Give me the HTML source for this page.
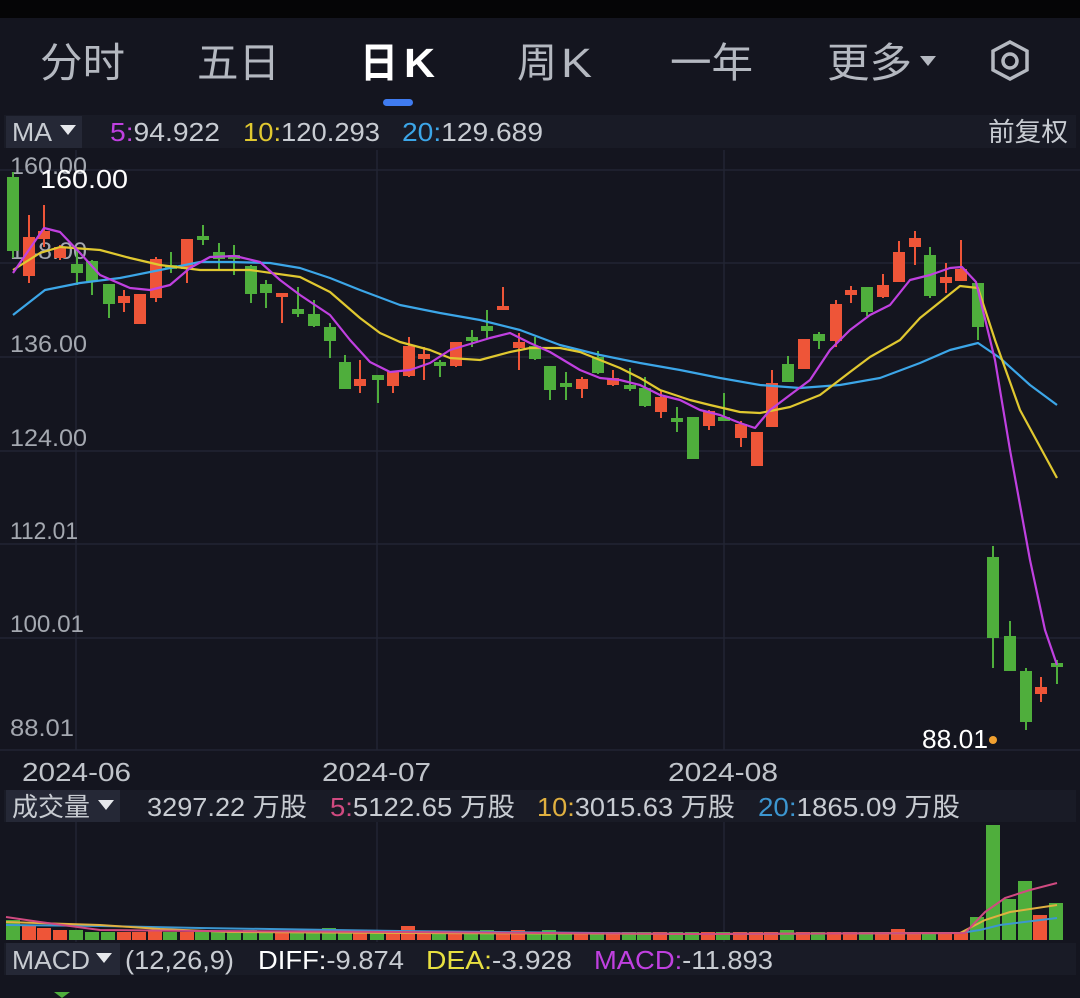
<!DOCTYPE html>
<html><head><meta charset="utf-8"><style>
body{margin:0;width:1080px;height:998px;background:#14151f;overflow:hidden;font-family:"Liberation Sans","Noto Sans CJK SC",sans-serif;}
svg{position:absolute;left:0;top:0}
</style></head><body>
<svg width="1080" height="998" xmlns="http://www.w3.org/2000/svg" font-family="Liberation Sans, Noto Sans CJK SC, sans-serif">
<rect x="0" y="0" width="1080" height="998" fill="#14151f"/>
<rect x="0" y="0" width="1080" height="18" fill="#050506"/>
<!-- tabs -->
<g font-size="41" fill="#b4b8c0">
<text x="40" y="77" textLength="85" lengthAdjust="spacingAndGlyphs">分时</text>
<text x="197" y="77" textLength="83" lengthAdjust="spacingAndGlyphs">五日</text>
<text x="360" y="77" fill="#ffffff" font-weight="bold" textLength="38" lengthAdjust="spacingAndGlyphs">日</text><text x="404" y="77" fill="#ffffff" font-weight="bold" textLength="31" lengthAdjust="spacingAndGlyphs">K</text>
<text x="517" y="77" textLength="40" lengthAdjust="spacingAndGlyphs">周</text><text x="561" y="77" textLength="31" lengthAdjust="spacingAndGlyphs">K</text>
<text x="670" y="77" textLength="83" lengthAdjust="spacingAndGlyphs">一年</text>
<text x="827" y="77" textLength="85" lengthAdjust="spacingAndGlyphs">更多</text>
</g>
<path d="M920 56 L936 56 L928 66Z" fill="#b4b8c0"/>
<polygon points="1010,42 1027,51 1027,70 1010,79 993,70 993,51" fill="none" stroke="#b4b8c0" stroke-width="3.5"/>
<circle cx="1010" cy="61" r="7" fill="none" stroke="#b4b8c0" stroke-width="3.5"/>
<rect x="383" y="99" width="30" height="7" rx="3.5" fill="#3f7bf0"/>
<!-- MA header -->
<rect x="4" y="115" width="1072" height="33" fill="#191b26"/>
<rect x="6" y="116" width="76" height="32" fill="#252836"/>
<g font-size="26" fill="#c8ccd2">
<text x="12" y="141" textLength="40" lengthAdjust="spacingAndGlyphs">MA</text>
<text x="110" y="141" textLength="110" lengthAdjust="spacingAndGlyphs"><tspan fill="#c040e0">5:</tspan>94.922</text>
<text x="243" y="141" textLength="137" lengthAdjust="spacingAndGlyphs"><tspan fill="#e0c830">10:</tspan>120.293</text>
<text x="402" y="141" textLength="141" lengthAdjust="spacingAndGlyphs"><tspan fill="#3ca6e8">20:</tspan>129.689</text>
<text x="988" y="141" textLength="80" lengthAdjust="spacingAndGlyphs">前复权</text>
</g>
<path d="M60 125 L76 125 L68 135Z" fill="#e6e8ec"/>
<!-- grid -->
<g stroke="#222533" stroke-width="1.5">
<line x1="0" y1="170" x2="1080" y2="170"/>
<line x1="0" y1="263" x2="1080" y2="263"/>
<line x1="0" y1="357" x2="1080" y2="357"/>
<line x1="0" y1="451" x2="1080" y2="451"/>
<line x1="0" y1="544" x2="1080" y2="544"/>
<line x1="0" y1="638" x2="1080" y2="638"/>
<line x1="0" y1="750" x2="1080" y2="750"/>
<line x1="76" y1="150" x2="76" y2="750"/>
<line x1="377" y1="150" x2="377" y2="750"/>
<line x1="724" y1="150" x2="724" y2="750"/>
<line x1="76" y1="822" x2="76" y2="942"/>
<line x1="377" y1="822" x2="377" y2="942"/>
<line x1="724" y1="822" x2="724" y2="942"/>
</g>
<g font-size="24" fill="#a4a8b0">
<text x="10" y="174" textLength="77" lengthAdjust="spacingAndGlyphs">160.00</text>
<text x="10" y="259" textLength="77" lengthAdjust="spacingAndGlyphs">148.00</text>
<text x="10" y="352" textLength="77" lengthAdjust="spacingAndGlyphs">136.00</text>
<text x="10" y="446" textLength="77" lengthAdjust="spacingAndGlyphs">124.00</text>
<text x="10" y="539" textLength="68" lengthAdjust="spacingAndGlyphs">112.01</text>
<text x="10" y="632" textLength="74" lengthAdjust="spacingAndGlyphs">100.01</text>
<text x="10" y="736" textLength="64" lengthAdjust="spacingAndGlyphs">88.01</text>
</g>
<g stroke-width="2">
<g fill="#4fae3c" stroke="#4fae3c">
<line x1="13" y1="172" x2="13" y2="258"/><rect x="8" y="178" width="10" height="72"/>
<line x1="77" y1="250" x2="77" y2="285"/><rect x="72" y="265" width="10" height="7"/>
<line x1="92" y1="260" x2="92" y2="295"/><rect x="87" y="262" width="10" height="18"/>
<line x1="109" y1="285" x2="109" y2="318"/><rect x="104" y="285" width="10" height="18"/>
<line x1="171" y1="252" x2="171" y2="273"/><rect x="166" y="266" width="10" height="2"/>
<line x1="203" y1="225" x2="203" y2="245"/><rect x="198" y="237" width="10" height="2"/>
<line x1="219" y1="243" x2="219" y2="270"/><rect x="214" y="253" width="10" height="5"/>
<line x1="234" y1="245" x2="234" y2="275"/><rect x="229" y="256" width="10" height="2"/>
<line x1="251" y1="265" x2="251" y2="303"/><rect x="246" y="267" width="10" height="26"/>
<line x1="266" y1="280" x2="266" y2="308"/><rect x="261" y="285" width="10" height="7"/>
<line x1="298" y1="287" x2="298" y2="317"/><rect x="293" y="310" width="10" height="3"/>
<line x1="314" y1="300" x2="314" y2="327"/><rect x="309" y="315" width="10" height="10"/>
<line x1="330" y1="323" x2="330" y2="358"/><rect x="325" y="328" width="10" height="12"/>
<line x1="345" y1="355" x2="345" y2="388"/><rect x="340" y="363" width="10" height="25"/>
<line x1="378" y1="377" x2="378" y2="403"/><rect x="373" y="376" width="10" height="3"/>
<line x1="440" y1="360" x2="440" y2="377"/><rect x="435" y="363" width="10" height="2"/>
<line x1="472" y1="330" x2="472" y2="347"/><rect x="467" y="338" width="10" height="2"/>
<line x1="487" y1="310" x2="487" y2="338"/><rect x="482" y="327" width="10" height="3"/>
<line x1="535" y1="337" x2="535" y2="360"/><rect x="530" y="347" width="10" height="11"/>
<line x1="550" y1="367" x2="550" y2="400"/><rect x="545" y="367" width="10" height="22"/>
<line x1="566" y1="372" x2="566" y2="400"/><rect x="561" y="384" width="10" height="2"/>
<line x1="598" y1="351" x2="598" y2="374"/><rect x="593" y="358" width="10" height="14"/>
<line x1="630" y1="368" x2="630" y2="391"/><rect x="625" y="386" width="10" height="2"/>
<line x1="645" y1="377" x2="645" y2="407"/><rect x="640" y="389" width="10" height="16"/>
<line x1="677" y1="407" x2="677" y2="432"/><rect x="672" y="419" width="10" height="2"/>
<rect x="688" y="418" width="10" height="40"/>
<line x1="724" y1="393" x2="724" y2="421"/><rect x="719" y="418" width="10" height="2"/>
<line x1="788" y1="356" x2="788" y2="382"/><rect x="783" y="365" width="10" height="16"/>
<line x1="819" y1="332" x2="819" y2="349"/><rect x="814" y="335" width="10" height="5"/>
<line x1="867" y1="288" x2="867" y2="316"/><rect x="862" y="288" width="10" height="23"/>
<line x1="930" y1="247" x2="930" y2="298"/><rect x="925" y="256" width="10" height="39"/>
<line x1="978" y1="284" x2="978" y2="340"/><rect x="973" y="284" width="10" height="42"/>
<line x1="993" y1="546" x2="993" y2="668"/><rect x="988" y="558" width="10" height="79"/>
<line x1="1010" y1="621" x2="1010" y2="670"/><rect x="1005" y="637" width="10" height="33"/>
<line x1="1026" y1="668" x2="1026" y2="730"/><rect x="1021" y="672" width="10" height="49"/>
<line x1="1057" y1="660" x2="1057" y2="684"/><rect x="1052" y="664" width="10" height="2"/>
</g>
<g fill="#ee5538" stroke="#ee5538">
<line x1="29" y1="215" x2="29" y2="283"/><rect x="24" y="238" width="10" height="37"/>
<line x1="44" y1="205" x2="44" y2="247"/><rect x="39" y="232" width="10" height="6"/>
<line x1="60" y1="245" x2="60" y2="260"/><rect x="55" y="248" width="10" height="9"/>
<line x1="124" y1="290" x2="124" y2="312"/><rect x="119" y="297" width="10" height="5"/>
<rect x="135" y="295" width="10" height="28"/>
<line x1="156" y1="257" x2="156" y2="302"/><rect x="151" y="260" width="10" height="37"/>
<line x1="187" y1="240" x2="187" y2="283"/><rect x="182" y="240" width="10" height="28"/>
<line x1="282" y1="294" x2="282" y2="323"/><rect x="277" y="294" width="10" height="2"/>
<line x1="360" y1="360" x2="360" y2="393"/><rect x="355" y="380" width="10" height="5"/>
<line x1="393" y1="373" x2="393" y2="393"/><rect x="388" y="373" width="10" height="12"/>
<line x1="409" y1="337" x2="409" y2="377"/><rect x="404" y="347" width="10" height="28"/>
<line x1="424" y1="347" x2="424" y2="380"/><rect x="419" y="355" width="10" height="3"/>
<line x1="456" y1="342" x2="456" y2="367"/><rect x="451" y="343" width="10" height="22"/>
<line x1="503" y1="287" x2="503" y2="309"/><rect x="498" y="307" width="10" height="2"/>
<line x1="519" y1="333" x2="519" y2="370"/><rect x="514" y="343" width="10" height="4"/>
<line x1="582" y1="377" x2="582" y2="398"/><rect x="577" y="380" width="10" height="8"/>
<line x1="613" y1="370" x2="613" y2="386"/><rect x="608" y="379" width="10" height="5"/>
<line x1="661" y1="391" x2="661" y2="418"/><rect x="656" y="398" width="10" height="13"/>
<line x1="709" y1="410" x2="709" y2="430"/><rect x="704" y="412" width="10" height="13"/>
<line x1="741" y1="421" x2="741" y2="447"/><rect x="736" y="425" width="10" height="12"/>
<rect x="752" y="433" width="10" height="32"/>
<line x1="772" y1="370" x2="772" y2="426"/><rect x="767" y="384" width="10" height="42"/>
<rect x="799" y="340" width="10" height="28"/>
<line x1="836" y1="300" x2="836" y2="347"/><rect x="831" y="305" width="10" height="35"/>
<line x1="851" y1="286" x2="851" y2="303"/><rect x="846" y="291" width="10" height="3"/>
<line x1="883" y1="274" x2="883" y2="298"/><rect x="878" y="286" width="10" height="10"/>
<line x1="899" y1="241" x2="899" y2="281"/><rect x="894" y="253" width="10" height="28"/>
<line x1="915" y1="231" x2="915" y2="265"/><rect x="910" y="239" width="10" height="7"/>
<line x1="946" y1="263" x2="946" y2="293"/><rect x="941" y="278" width="10" height="4"/>
<line x1="961" y1="240" x2="961" y2="280"/><rect x="956" y="270" width="10" height="10"/>
<line x1="1041" y1="677" x2="1041" y2="702"/><rect x="1036" y="688" width="10" height="5"/>
</g>
</g>
<g fill="none" stroke-width="2.2" stroke-linejoin="round">
<polyline stroke="#3ca6e8" points="13,315 45,290 80,283 120,278 160,270 200,262 230,262 270,263 300,268 330,278 360,290 400,305 440,313 480,320 520,330 560,345 600,355 640,363 680,370 720,378 760,385 800,388 840,385 880,378 920,363 950,350 978,343 1000,358 1030,385 1057,405"/>
<polyline stroke="#e0c830" points="13,270 40,253 60,247 100,250 130,258 160,265 200,270 250,270 300,277 330,292 360,318 380,333 400,342 430,350 450,358 480,360 510,352 530,348 560,348 580,352 600,360 620,368 640,378 660,390 690,400 710,405 740,412 760,413 790,407 820,395 850,372 870,357 900,340 920,318 940,302 960,286 978,288 995,340 1020,410 1057,478"/>
<polyline stroke="#c040e0" points="13,273 44,228 60,232 80,253 100,275 130,288 150,290 170,285 190,268 210,257 235,256 260,262 280,280 300,295 330,315 350,340 370,362 390,372 410,370 430,363 450,350 470,344 490,338 510,333 530,343 550,352 580,370 600,378 620,380 640,385 660,395 680,400 700,410 720,415 740,423 755,428 770,410 790,395 810,380 830,350 850,330 870,315 890,305 910,280 930,275 950,268 962,267 976,282 995,360 1010,450 1030,560 1045,630 1057,665"/>
</g>
<text x="40" y="188" font-size="26" fill="#ffffff" textLength="88" lengthAdjust="spacingAndGlyphs">160.00</text>
<text x="922" y="748" font-size="26" fill="#ffffff" textLength="66" lengthAdjust="spacingAndGlyphs">88.01</text>
<circle cx="993" cy="740" r="4" fill="#f0a030"/>
<g font-size="26" fill="#c0c4ca">
<text x="22" y="781" textLength="109" lengthAdjust="spacingAndGlyphs">2024-06</text>
<text x="322" y="781" textLength="109" lengthAdjust="spacingAndGlyphs">2024-07</text>
<text x="668" y="781" textLength="110" lengthAdjust="spacingAndGlyphs">2024-08</text>
</g>
<rect x="4" y="790" width="1072" height="32" fill="#191b26"/>
<rect x="6" y="790" width="114" height="32" fill="#252836"/>
<g font-size="26" fill="#c8ccd2">
<text x="12" y="816" textLength="78" lengthAdjust="spacingAndGlyphs">成交量</text>
<text x="147" y="816" textLength="160" lengthAdjust="spacingAndGlyphs">3297.22 万股</text>
<text x="330" y="816" textLength="185" lengthAdjust="spacingAndGlyphs"><tspan fill="#d04a80">5:</tspan>5122.65 万股</text>
<text x="537" y="816" textLength="198" lengthAdjust="spacingAndGlyphs"><tspan fill="#e0b040">10:</tspan>3015.63 万股</text>
<text x="758" y="816" textLength="202" lengthAdjust="spacingAndGlyphs"><tspan fill="#3c96d0">20:</tspan>1865.09 万股</text>
</g>
<path d="M98 800 L114 800 L106 810Z" fill="#e6e8ec"/>
<g fill="#4fae3c">
<rect x="6" y="920" width="14" height="20"/><rect x="69" y="930" width="14" height="10"/><rect x="85" y="932" width="14" height="8"/><rect x="101" y="932" width="14" height="8"/><rect x="163" y="932" width="14" height="8"/><rect x="195" y="932" width="14" height="8"/><rect x="211" y="932" width="14" height="8"/><rect x="227" y="932" width="14" height="8"/><rect x="243" y="930" width="14" height="10"/><rect x="259" y="932" width="14" height="8"/><rect x="290" y="932" width="14" height="8"/><rect x="306" y="932" width="14" height="8"/><rect x="322" y="928" width="14" height="12"/><rect x="338" y="930" width="14" height="10"/><rect x="370" y="932" width="14" height="8"/><rect x="432" y="932" width="14" height="8"/><rect x="464" y="932" width="14" height="8"/><rect x="480" y="930" width="14" height="10"/><rect x="527" y="932" width="14" height="8"/><rect x="542" y="930" width="14" height="10"/><rect x="558" y="932" width="14" height="8"/><rect x="590" y="932" width="14" height="8"/><rect x="622" y="932" width="14" height="8"/><rect x="637" y="932" width="14" height="8"/><rect x="669" y="932" width="14" height="8"/><rect x="685" y="932" width="14" height="8"/><rect x="716" y="932" width="14" height="8"/><rect x="780" y="930" width="14" height="10"/><rect x="811" y="932" width="14" height="8"/><rect x="859" y="932" width="14" height="8"/><rect x="922" y="932" width="14" height="8"/><rect x="970" y="917" width="14" height="23"/><rect x="986" y="825" width="14" height="115"/><rect x="1002" y="899" width="14" height="41"/><rect x="1018" y="881" width="14" height="59"/><rect x="1049" y="903" width="14" height="37"/>
</g>
<g fill="#ee5538">
<rect x="22" y="925" width="14" height="15"/><rect x="37" y="928" width="14" height="12"/><rect x="53" y="930" width="14" height="10"/><rect x="117" y="932" width="14" height="8"/><rect x="132" y="932" width="14" height="8"/><rect x="148" y="930" width="14" height="10"/><rect x="180" y="932" width="14" height="8"/><rect x="275" y="932" width="14" height="8"/><rect x="353" y="932" width="14" height="8"/><rect x="386" y="932" width="14" height="8"/><rect x="401" y="926" width="14" height="14"/><rect x="417" y="932" width="14" height="8"/><rect x="448" y="932" width="14" height="8"/><rect x="496" y="932" width="14" height="8"/><rect x="511" y="930" width="14" height="10"/><rect x="574" y="932" width="14" height="8"/><rect x="606" y="932" width="14" height="8"/><rect x="653" y="932" width="14" height="8"/><rect x="701" y="932" width="14" height="8"/><rect x="733" y="932" width="14" height="8"/><rect x="749" y="932" width="14" height="8"/><rect x="764" y="932" width="14" height="8"/><rect x="796" y="932" width="14" height="8"/><rect x="827" y="932" width="14" height="8"/><rect x="843" y="932" width="14" height="8"/><rect x="875" y="932" width="14" height="8"/><rect x="891" y="929" width="14" height="11"/><rect x="907" y="932" width="14" height="8"/><rect x="938" y="932" width="14" height="8"/><rect x="954" y="932" width="14" height="8"/><rect x="1033" y="915" width="14" height="25"/>
</g>
<g fill="none" stroke-width="2">
<polyline stroke="#3c96d0" points="6,925 100,926 200,928 400,931 700,934 960,933 980,930 1000,925 1057,918"/>
<polyline stroke="#e0b040" points="6,922 100,925 160,929 230,932 400,933 700,934 960,933 985,920 1010,912 1057,905"/>
<polyline stroke="#d04a80" points="6,917 40,922 100,930 200,931 400,932 700,934 965,933 985,912 1005,898 1030,890 1057,883"/>
</g>
<rect x="4" y="943" width="1072" height="32" fill="#191b26"/>
<rect x="6" y="943" width="114" height="32" fill="#252836"/>
<g font-size="26" fill="#c8ccd2">
<text x="12" y="969" textLength="78" lengthAdjust="spacingAndGlyphs">MACD</text>
<text x="125" y="969" textLength="109" lengthAdjust="spacingAndGlyphs">(12,26,9)</text>
<text x="258" y="969" fill="#ffffff" textLength="146" lengthAdjust="spacingAndGlyphs">DIFF:<tspan fill="#c8ccd2">-9.874</tspan></text>
<text x="426" y="969" fill="#e8e040" textLength="146" lengthAdjust="spacingAndGlyphs">DEA:<tspan fill="#c8ccd2">-3.928</tspan></text>
<text x="594" y="969" fill="#c040e0" textLength="179" lengthAdjust="spacingAndGlyphs">MACD:<tspan fill="#c8ccd2">-11.893</tspan></text>
</g>
<path d="M96 953 L112 953 L104 963Z" fill="#e6e8ec"/>
<path d="M54 992 L70 992 L62 998Z" fill="#4fae3c"/>
</svg>
</body></html>
